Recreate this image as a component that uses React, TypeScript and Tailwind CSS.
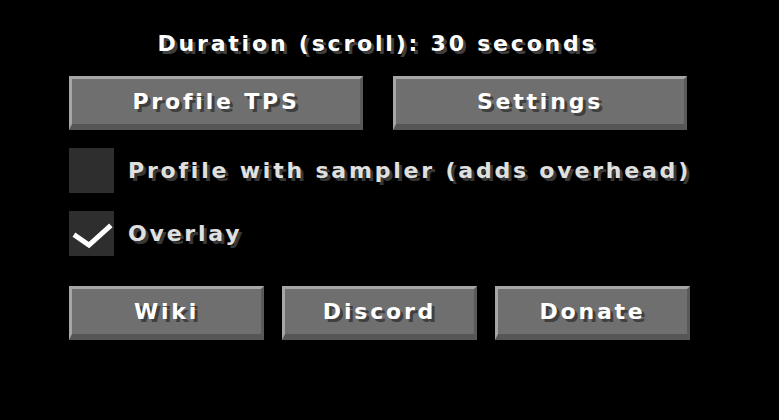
const font = { fontFamily: '"DejaVu Sans", "Liberation Sans", sans-serif' }

function McButton({ label, w }: { label: string; w: string }) {
    return (
        <div className={`${w} h-[54px] shrink-0 flex items-center justify-center bg-[#6f6f6f] border-t-[3px] border-l-[3px] border-t-[#a6a6a6] border-l-[#a6a6a6] border-r-[3px] border-r-[#5a5a5a] border-b-[6px] border-b-[#565656]`}>
            <span className="whitespace-nowrap text-[22px] font-bold leading-none tracking-[2.8px] text-white [text-shadow:3px_3px_0_#3f3f3f]">
                {label}
            </span>
        </div>
    )
}

function Check({ checked, label }: { checked: boolean; label: string }) {
    return (
        <div className="flex items-center h-[45px] gap-[14px]">
            <div className="w-[45px] h-[45px] bg-[#2e2e2e] shrink-0">
                {checked && (
                    <svg width="45" height="45" viewBox="0 0 45 45">
                        <polyline points="7,25 20,34 40,16" fill="none" stroke="#ffffff" strokeWidth="5" strokeLinejoin="miter" strokeLinecap="square" />
                    </svg>
                )}
            </div>
            <span className="whitespace-nowrap text-[22px] font-bold leading-none tracking-[2.8px] text-[#e0e0e0] [text-shadow:3px_3px_0_#383838]">
                {label}
            </span>
        </div>
    )
}

export default function App() {
    return (
        <div className="w-[779px] h-[420px] bg-black pt-[26px] pl-[69px] overflow-hidden" style={font}>
            <div className="w-[621px] flex flex-col">
                {/* Title */}
                <div className="h-[36px] flex items-center justify-center pr-[4px]">
                    <span className="whitespace-nowrap text-[22px] font-bold leading-none tracking-[2.8px] text-white [text-shadow:3px_3px_0_#3f3f3f]">
                        Duration (scroll): 30 seconds
                    </span>
                </div>

                {/* Main buttons */}
                <div className="mt-[14px] flex gap-[30px]">
                    <McButton label="Profile TPS" w="w-[294px]" />
                    <McButton label="Settings" w="w-[294px]" />
                </div>

                {/* Options */}
                <div className="mt-[18px] flex flex-col gap-[18px]">
                    <Check checked={false} label="Profile with sampler (adds overhead)" />
                    <Check checked={true} label="Overlay" />
                </div>

                {/* Links */}
                <div className="mt-[30px] flex gap-[18px]">
                    <McButton label="Wiki" w="w-[195px]" />
                    <McButton label="Discord" w="w-[195px]" />
                    <McButton label="Donate" w="w-[195px]" />
                </div>
            </div>
        </div>
    )
}
